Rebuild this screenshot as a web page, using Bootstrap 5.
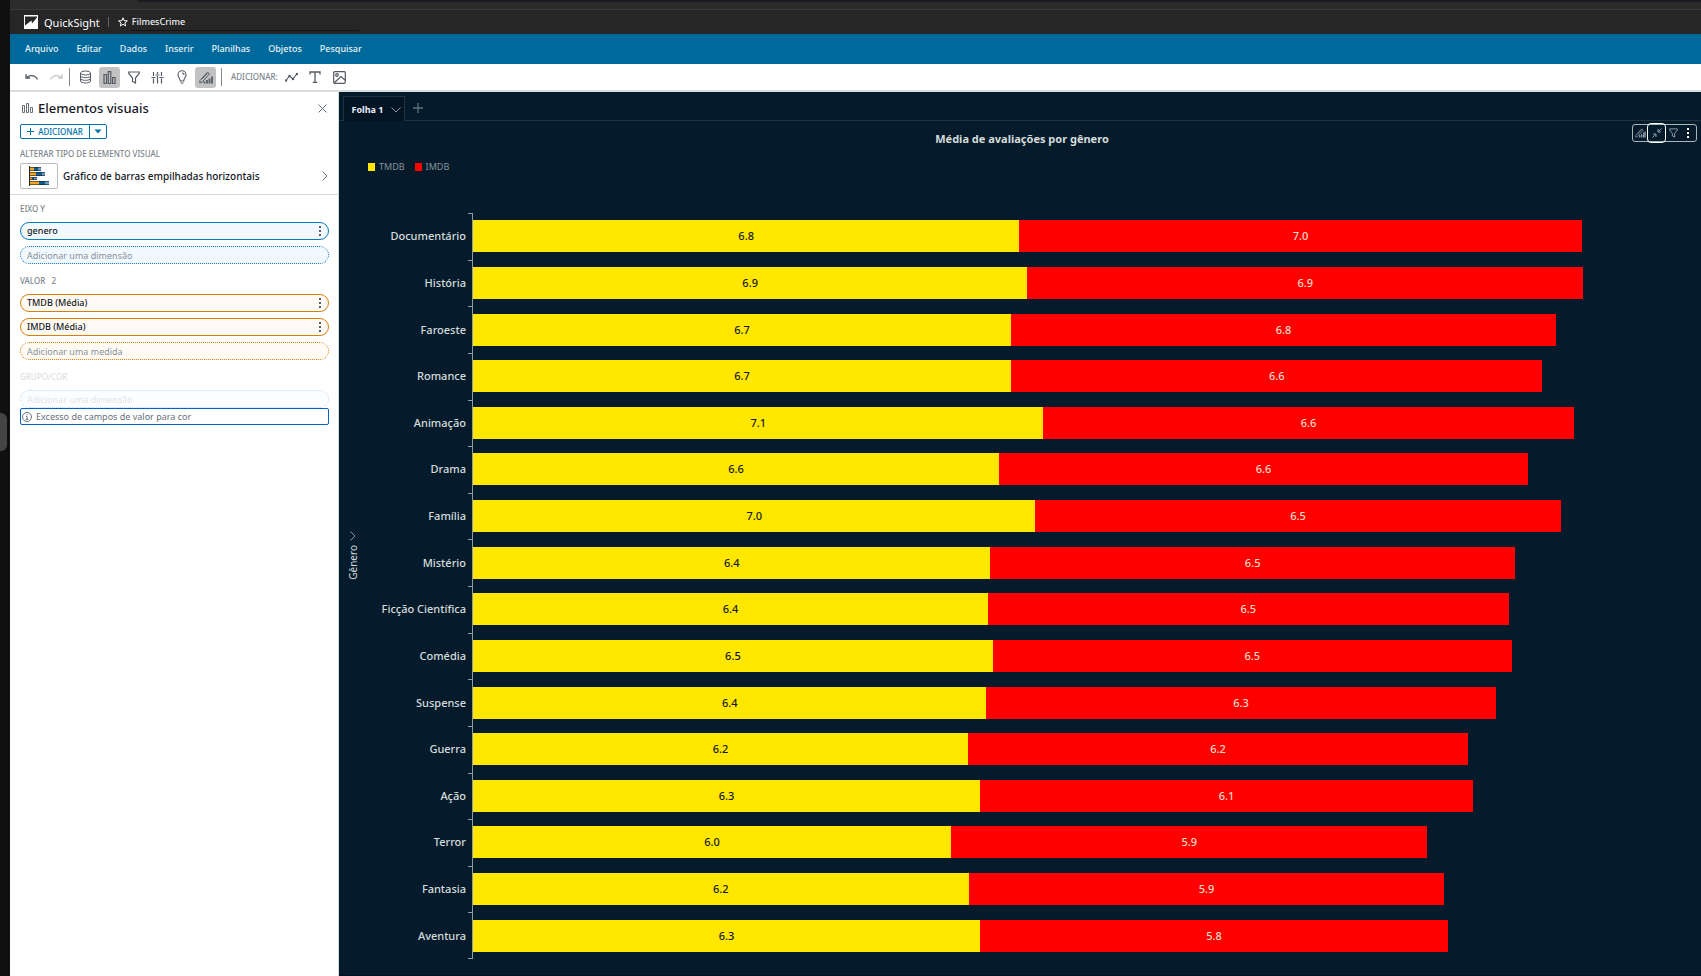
<!DOCTYPE html>
<html lang="pt-BR" data-bs-theme="light">
<head>
<meta charset="utf-8">
<meta name="viewport" content="width=device-width, initial-scale=1">
<title>QuickSight – FilmesCrime</title>
<link href="https://cdn.jsdelivr.net/npm/bootstrap@5.3.0/dist/css/bootstrap.min.css" rel="stylesheet">
<style>
  body { font-family: "Noto Sans", "Open Sans", sans-serif; font-size: 9px; line-height: 12px; color: #16191f; background: #fff; }
  button, input { font: inherit; color: inherit; }
  svg { display: block; fill: none; stroke: currentColor; flex: none; }
  .dots { fill: #545b64; stroke: none; }
  .dots-light { fill: #fff; stroke: none; }
  .art { stroke: none; }
  .ic-grey { color: #687078; }
  .ic-dim { color: #8d9ba5; }
  .ic-faint { color: #5f707c; }
  .ic-off { color: #c8c8c8; }
  .plain { background: none; border: 0; padding: 0; display: flex; align-items: center; justify-content: center; }
  .dock { width: 10px; background: #101010; }
  .dock span { width: 7px; height: 38px; background: #444; border-radius: 0 6px 6px 0; margin-bottom: 112px; }
  .chrome-strip { height: 10px; background: #2b2b2b; border-bottom: 1px solid #3b3b3b; padding-left: 128px; }
  .chrome-strip div { height: 2px; background: #1c1b22; border-radius: 0 0 0 6px; }
  .brand-bar { height: 24px; background: #262626; color: #fff; padding-left: 12px; }
  .brand-logo { margin-left: 2px; }
  .brand-name { font-size: 11px; line-height: 16px; margin: 2px 8px 0 6px; }
  .brand-sep { width: 1px; height: 10px; background: #666; margin-right: 9px; }
  .analysis-name { width: 228px; height: 18px; background: none; border: 0; border-bottom: 1px solid #151515; color: #eee; font-weight: 500; padding: 0 1px; margin-left: 3px; }
  .menu-bar { height: 30px; background: #00699b; padding-left: 15px; gap: 18px; }
  .menu-bar a { color: #e6f2f8; text-decoration: none; font-weight: 500; }
  .tool-bar { height: 28px; border-bottom: 2px solid #d9dede; padding-left: 11px; gap: 3px; color: #545b64; }
  .tool-bar .plain { width: 21px; height: 21px; border-radius: 3px; }
  .tool-bar .on { background: #c2c2c2; }
  .tool-sep { width: 1px; height: 18px; background: #888; margin-right: 2px; }
  .tool-bar .on + .tool-sep { margin-left: 2px; }
  .caps { font-size: 8px; line-height: 10px; color: #7b858b; font-weight: 500; text-transform: uppercase; }
  .side { width: 329px; border-right: 1px solid #d5dbdb; }
  .side-head { padding: 6px 10px 5px 10px; border-bottom: 1px solid #d5dbdb; }
  .side-title { font-size: 13px; line-height: 20px; font-weight: 500; margin: 0 0 0 5px; }
  .side-icon { margin-left: 2px; }
  .close-btn { margin-right: 1px; }
  .add-group { color: #0073a8; font-size: 8px; line-height: 12px; font-weight: 500; border: 1px solid #0073a8; border-radius: 2px; height: 15px; width: 87px; margin: 6px 0 10px; }
  .add-group .plain + .plain { border-left: 1px solid #0073a8; width: 17px; }
  .thumb { width: 38px; height: 26px; border: 1px solid #bbb; border-radius: 2px; margin-right: 5px; }
  .type-name { font-size: 10px; line-height: 16px; font-weight: 500; }
  .wells { padding: 9px 9px 0 10px; }
  .pill-field { height: 18px; border: 1px solid #0a7bbd; border-radius: 9px; background: #f1f8fe; padding: 0 7px 0 6px; margin-bottom: 6px; width: 100%; }
  .pill-field span { font-weight: 500; }
  .pill-field.measure { border-color: #d5800b; background: #fffbf4; }
  .pill-drop { border-style: dotted; color: #87929a; }
  .pill-drop::placeholder { color: #87929a; opacity: 1; }
  .well-label { margin-bottom: 8px; }
  .well { margin-bottom: 12px; }
  .faded { opacity: .25; }
  .notice { height: 17px; border: 1px solid #0a5fc4; border-radius: 2px; color: #687078; padding-left: 1px; gap: 4px; }
  .sheet { background: #051b2c; color: #d5dbdb; border-bottom: 1px solid #02101c; }
  .tabs { height: 29px; padding: 4px 0 0 4px; border-bottom: 1px solid #1d3342; }
  .tab { width: 62px; height: 25px; border: 1px solid #1d3342; border-bottom: 0; background: #031422; color: #eef; font-weight: 700; gap: 8px; margin-bottom: -1px; padding: 2px 0 0 5px; }
  .chart-title { font-size: 11px; line-height: 16px; font-weight: 700; margin: 0; }
  .chart-head { padding: 10px 4px 0 8px; }
  .visual-menu { top: 3px; right: 4px; width: 65px; height: 18px; border: 1px solid #aab7b8; border-radius: 3px; color: #8d9ba5; }
  .visual-menu .plain { width: 14px; height: 16px; flex: none; }
  .visual-menu .plain.active { width: 19px; height: 20px; border: 1px solid #fff; border-radius: 4px; }
  .visual-menu .plain:last-child { flex: 1; }
  .legend-row { padding: 14px 0 0 29px; gap: 10px; color: #87929a; height: 66px; }
  .swatch { width: 7px; height: 8px; margin-right: 4px; }
  .c-tmdb { background: #ffe700; color: #16191f; }
  .c-imdb { background: #f00; color: #f6d9c8; }
  .y-name { width: 27px; padding-bottom: 78px; font-size: 10px; }
  .y-name span { writing-mode: vertical-rl; transform: rotate(180deg); }
  .plot { padding-bottom: 16px; font-size: 11px; line-height: 16px; font-weight: 500; }
  .cat { width: 106px; padding-right: 6px; }
  .track { border-left: 1px solid #8e9ba3; }
  .track::before { content: ""; position: absolute; left: -5px; top: 0; width: 4px; height: 1px; background: #8e9ba3; }
  .plot-row:last-child .track::after { content: ""; position: absolute; left: -5px; bottom: 0; width: 4px; height: 1px; background: #8e9ba3; }
  .seg { height: 32px; display: flex; align-items: center; justify-content: center; }
</style>
</head>
<body>
<div class="d-flex min-vh-100">
  <div class="dock d-flex flex-column justify-content-center flex-shrink-0"><span></span></div>
  <div class="flex-grow-1 d-flex flex-column">
    <div class="chrome-strip"><div></div></div>
    <header class="brand-bar d-flex align-items-center">
      <svg class="art brand-logo" width="14" height="14" viewBox="0 0 14 14"><path d="M0 0h14v14H0z" fill="#fff"/><path d="M1 1.500h12v1L8 8.500 7.500 5.500 1 10.500z" fill="#262626"/></svg>
      <span class="brand-name">QuickSight</span>
      <span class="brand-sep"></span>
      <button class="plain" aria-label="Favorito"><svg width="10" height="10" viewBox="0 0 10 10"><path d="m5 .8 1.200 2.900 3.200.2-2.500 2 .8 3.100L5 7.300 2.300 9l.8-3.100-2.500-2 3.200-.2z"/></svg></button>
      <input class="analysis-name" value="FilmesCrime" aria-label="Nome da análise">
    </header>
    <nav class="menu-bar d-flex align-items-center">
      <a href="#">Arquivo</a><a href="#">Editar</a><a href="#">Dados</a><a href="#">Inserir</a><a href="#">Planilhas</a><a href="#">Objetos</a><a href="#">Pesquisar</a>
    </nav>
    <div class="tool-bar d-flex align-items-center">
      <button class="plain" aria-label="Desfazer"><svg width="14" height="10" viewBox="0 0 14 10" stroke-width="1.300"><path d="M1 2v4h4M1.200 5.800C4 3 10 2 12.500 7.500"/></svg></button>
      <button class="plain ic-off" aria-label="Refazer" disabled><svg width="14" height="10" viewBox="0 0 14 10" stroke-width="1.300"><path d="M13 2v4H9M12.800 5.800C10 3 4 2 1.500 7.500"/></svg></button>
      <span class="tool-sep"></span>
      <button class="plain" aria-label="Dados"><svg width="13" height="14" viewBox="0 0 13 14"><ellipse cx="6.500" cy="3" rx="5" ry="2"/><path d="M1.500 3v8c0 2.600 10 2.600 10 0V3M1.500 5.700c0 2.600 10 2.600 10 0M1.500 8.400c0 2.600 10 2.600 10 0"/></svg></button>
      <button class="plain on" aria-label="Elementos visuais"><svg width="13" height="13" viewBox="0 0 13 13" stroke-width="1.200"><path d="M1 3.500h2.500v9H1zM5.300.6h2.500v11.900H5.300zM9.600 6.500h2.500v6H9.600z"/></svg></button>
      <button class="plain" aria-label="Filtros"><svg width="12" height="13" viewBox="0 0 12 13" stroke-width="1.200"><path d="M.8 1h10.400v1.500L7.500 7v5l-3-1.500V7L.8 2.500z"/></svg></button>
      <button class="plain" aria-label="Parâmetros"><svg width="13" height="13" viewBox="0 0 13 13" stroke-width="1.200"><path d="M2.500 1v4M2.500 7.500v5M6.500 1v2M6.500 5v7.500M10.500 1v4M10.500 7.500v5M.5 6.500h4M4.500 4h4M8.500 6.500h4"/></svg></button>
      <button class="plain" aria-label="Insights"><svg width="10" height="14" viewBox="0 0 10 14" stroke-width="1.100"><path d="M3.300 11C3.300 8.500 1 7.500 1 4.800a4 4 0 0 1 8 0C9 7.500 6.700 8.500 6.700 11zM3.500 13h3M5 3a2 2 0 0 1 2 2"/></svg></button>
      <button class="plain on" aria-label="Formatar"><svg width="14" height="13" viewBox="0 0 14 13"><path d="M1 9.500 8.500 1.200l2 1.600L3.300 11 .8 12zM2.800 8.200l5.700-6"/><path d="M5.500 12.500v-2M8 12.500V9M10.500 12.500V7.500M13 12.500V5.500" stroke-width="1.800"/></svg></button>
      <span class="tool-sep"></span>
      <span class="caps ms-1">Adicionar:</span>
      <button class="plain" aria-label="Adicionar linha"><svg width="13" height="10" viewBox="0 0 13 10" stroke-width="1.200"><path d="m1 8.500 3.500-4.500 3.500 3 3.800-5"/><path d="M1 8.500h0M4.500 4h0M8 7h0M12 2h0" stroke-width="2.500" stroke-linecap="round"/></svg></button>
      <button class="plain" aria-label="Adicionar texto"><svg width="12" height="12" viewBox="0 0 12 12" stroke-width="1.300"><path d="M1 3.500V1h10v2.500M6 1v10.300M3.800 11.300h4.400"/></svg></button>
      <button class="plain" aria-label="Adicionar imagem"><svg width="13" height="13" viewBox="0 0 13 13" stroke-width="1.200"><rect x=".7" y=".7" width="11.600" height="11.600" rx="1"/><circle cx="4" cy="4" r="1.300"/><path d="m1 12 7-6.500 4.500 4"/></svg></button>
    </div>
    <main class="flex-grow-1 d-flex">
      <aside class="side flex-shrink-0">
        <div class="side-head">
          <div class="d-flex align-items-center">
            <svg class="side-icon ic-grey" width="11" height="10" viewBox="0 0 11 10"><path d="M.5 2.500h2v7h-2zM4.500.5h2v9h-2zM8.500 4.500h2v5h-2z"/></svg>
            <h1 class="side-title">Elementos visuais</h1>
            <button class="plain ms-auto close-btn ic-grey" aria-label="Fechar"><svg width="9" height="9" viewBox="0 0 9 9"><path d="m.5.5 8 8m0-8-8 8"/></svg></button>
          </div>
          <div class="add-group d-flex">
            <button class="plain flex-grow-1"><svg class="me-1" width="7" height="7" viewBox="0 0 7 7"><path d="M3.500 0v7M0 3.500h7"/></svg>ADICIONAR</button>
            <button class="plain" aria-label="Mais opções"><svg class="art" width="8" height="5" viewBox="0 0 8 5"><path d="M.5.500h7L4 4.500z" fill="currentColor"/></svg></button>
          </div>
          <div class="caps">Alterar tipo de elemento visual</div>
          <button class="plain w-100 mt-1 justify-content-start">
            <span class="thumb d-flex align-items-center justify-content-center"><svg class="art" width="20" height="20" viewBox="0 0 20 20"><path d="M0 0h1v20H0z" fill="#222"/><path d="M1 1h4v4H1zM1 6h6v4H1zM1 11h2v3H1zM1 15h9v4H1z" fill="#f5a623"/><path d="M5 1h4v4H5zM7 6h6v4H7zM3 11h2v3H3zM10 15h6v4h-6z" fill="#0b5d8f"/><path d="M9 1h3v4H9zM13 6h3v4h-3zM5 11h3v3H5zM16 15h4v4h-4z" fill="#6d9dc0"/><path d="M1 1.500h11M1 4.500h11M1 6.500h15M1 9.500h15M1 11.500h7M1 13.500h7M1 15.500h19M1 18.500h19" stroke="#222" stroke-width=".6"/></svg></span>
            <span class="type-name">Gráfico de barras empilhadas horizontais</span>
            <svg class="ms-auto ic-grey" width="6" height="10" viewBox="0 0 6 10"><path d="m.5.5 4.500 4.500L.5 9.500"/></svg>
          </button>
        </div>
        <div class="wells">
          <div class="well">
            <div class="caps well-label">Eixo Y</div>
            <button class="pill-field d-flex align-items-center justify-content-between"><span>genero</span><svg class="dots" width="2" height="10" viewBox="0 0 2 10"><path d="M0 0h2v2H0zM0 4h2v2H0zM0 8h2v2H0z"/></svg></button>
            <input class="pill-field pill-drop d-block" placeholder="Adicionar uma dimensão" aria-label="Adicionar uma dimensão ao eixo Y">
          </div>
          <div class="well">
            <div class="caps well-label">Valor &nbsp; 2</div>
            <button class="pill-field measure d-flex align-items-center justify-content-between"><span>TMDB (Média)</span><svg class="dots" width="2" height="10" viewBox="0 0 2 10"><path d="M0 0h2v2H0zM0 4h2v2H0zM0 8h2v2H0z"/></svg></button>
            <button class="pill-field measure d-flex align-items-center justify-content-between"><span>IMDB (Média)</span><svg class="dots" width="2" height="10" viewBox="0 0 2 10"><path d="M0 0h2v2H0zM0 4h2v2H0zM0 8h2v2H0z"/></svg></button>
            <input class="pill-field measure pill-drop d-block" placeholder="Adicionar uma medida" aria-label="Adicionar uma medida">
          </div>
          <div class="faded">
            <div class="caps well-label">Grupo/Cor</div>
            <input class="pill-field pill-drop d-block mb-0" placeholder="Adicionar uma dimensão" aria-label="Adicionar uma dimensão ao grupo" disabled>
          </div>
          <div class="notice d-flex align-items-center"><svg width="10" height="10" viewBox="0 0 10 10"><circle cx="5" cy="5" r="4.500"/><path d="M5 2.300v1M4 4.500h1v3M3.800 7.500h2.500"/></svg>Excesso de campos de valor para cor</div>
        </div>
      </aside>
      <section class="sheet flex-grow-1 d-flex flex-column">
        <div class="tabs d-flex align-items-center">
          <button class="tab plain">Folha 1 <svg class="ic-dim" width="10" height="6" viewBox="0 0 10 6"><path d="m.5.500 4.500 4.500L9.500.5"/></svg></button>
          <button class="plain ms-2 ic-faint" aria-label="Adicionar folha"><svg width="10" height="10" viewBox="0 0 10 10" stroke-width="1.300"><path d="M5 0v10M0 5h10"/></svg></button>
        </div>
        <div class="chart-head position-relative text-center">
          <h2 class="chart-title">Média de avaliações por gênero</h2>
          <div class="visual-menu position-absolute d-flex align-items-center">
            <button class="plain" aria-label="Formatar visual"><svg width="11" height="10" viewBox="0 0 14 13"><path d="M1 9.500 8.500 1.200l2 1.600L3.300 11 .8 12zM2.800 8.200l5.700-6"/><path d="M6 12.500V9.500M8.500 12.500V8M11 12.500V6M13 12.500V4.500" stroke-width="1.700"/></svg></button>
            <button class="plain active" aria-label="Minimizar"><svg width="10" height="10" viewBox="0 0 10 10"><path d="M9.500.5 6 4M6 1v3h3M.5 9.500 4 6M1 6h3v3"/></svg></button>
            <button class="plain" aria-label="Filtrar"><svg width="9" height="10" viewBox="0 0 12 13" stroke-width="1.300"><path d="M.8 1h10.400v1.500L7.500 7v5l-3-1.500V7L.8 2.500z"/></svg></button>
            <button class="plain" aria-label="Opções"><svg class="dots-light" width="2" height="10" viewBox="0 0 2 10"><path d="M0 0h2v2H0zM0 4h2v2H0zM0 8h2v2H0z"/></svg></button>
          </div>
        </div>
        <div class="legend-row d-flex">
          <div class="d-flex align-items-center align-self-start"><span class="swatch c-tmdb"></span>TMDB</div>
          <div class="d-flex align-items-center align-self-start"><span class="swatch c-imdb"></span>IMDB</div>
        </div>
        <div class="flex-grow-1 d-flex">
          <div class="y-name d-flex flex-column align-items-center justify-content-center">
            <svg class="mb-1 ic-dim" width="6" height="10" viewBox="0 0 6 10"><path d="m.5.5 4.500 4.500L.5 9.500"/></svg>
            <span>Gênero</span>
          </div>
          <div class="plot flex-grow-1 d-flex flex-column" id="plot"></div>
        </div>
      </section>
    </main>
  </div>
</div>
<script src="https://cdn.jsdelivr.net/npm/bootstrap@5.3.0/dist/js/bootstrap.bundle.min.js"></script>
<script>
  // Average rating per genre: [genre, TMDB, IMDB]
  const ratings = [
    ["Documentário", 6.80, 7.00], ["História", 6.90, 6.92], ["Faroeste", 6.70, 6.78], ["Romance", 6.70, 6.61],
    ["Animação", 7.10, 6.60], ["Drama", 6.55, 6.58], ["Família", 7.00, 6.54], ["Mistério", 6.44, 6.53],
    ["Ficção Científica", 6.41, 6.48], ["Comédia", 6.47, 6.46], ["Suspense", 6.39, 6.34], ["Guerra", 6.16, 6.23],
    ["Ação", 6.31, 6.14], ["Terror", 5.95, 5.93], ["Fantasia", 6.17, 5.92], ["Aventura", 6.31, 5.83]
  ];
  const axisMax = 15.286;
  document.getElementById("plot").innerHTML = ratings.map(([genre, tmdb, imdb]) => `
    <div class="plot-row d-flex flex-fill">
      <div class="cat d-flex align-items-center justify-content-end flex-shrink-0">${genre}</div>
      <div class="track position-relative flex-grow-1 d-flex align-items-center">
        <div class="seg c-tmdb" style="width:${tmdb / axisMax * 100}%">${(Math.round(tmdb * 10 + 1e-9) / 10).toFixed(1)}</div>
        <div class="seg c-imdb" style="width:${imdb / axisMax * 100}%">${(Math.round(imdb * 10 + 1e-9) / 10).toFixed(1)}</div>
      </div>
    </div>`).join("");
</script>
</body>
</html>
